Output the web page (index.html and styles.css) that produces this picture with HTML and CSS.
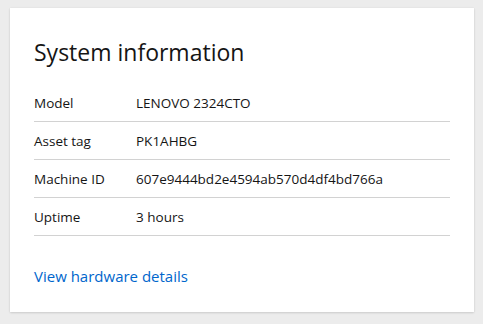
FILE: index.html
```html
<!DOCTYPE html>
<html lang="en">
<head>
    <meta charset="UTF-8">
    <title>System information</title>
    <link rel="stylesheet" href="styles.css">
</head>
<body>
<div class="page">
    <section class="card">
        <h2 class="card-title">System information</h2>
        <dl class="info-list">
            <div class="info-row">
                <dt>Model</dt>
                <dd>LENOVO 2324CTO</dd>
            </div>
            <div class="info-row">
                <dt>Asset tag</dt>
                <dd>PK1AHBG</dd>
            </div>
            <div class="info-row">
                <dt>Machine ID</dt>
                <dd>607e9444bd2e4594ab570d4df4bd766a</dd>
            </div>
            <div class="info-row">
                <dt>Uptime</dt>
                <dd>3 hours</dd>
            </div>
        </dl>
        <a class="card-link" href="#">View hardware details</a>
    </section>
</div>
</body>
</html>
```

FILE: styles.css
```css
*, ::before, ::after {
    box-sizing: border-box;
}

* {
    margin: 0;
}

html, body {
    height: 100%;
}

body {
    background: #ececec;
    font-family: "Open Sans", "Noto Sans", sans-serif;
    color: #151515;
}

.page {
    padding: 8px 9px 0 10px;
}

.card {
    display: flex;
    flex-direction: column;
    height: 304px;
    padding: 24px 24px 0;
    background: #fff;
    box-shadow: 0 1px 2px rgba(3, 3, 3, 0.12), 0 0 2px rgba(3, 3, 3, 0.06);
}

.card-title {
    font-size: 23px;
    font-weight: 400;
    line-height: 32px;
    margin-top: 4px;
}

.info-list {
    margin-top: 16px;
    font-size: 13.5px;
}

.info-row {
    display: flex;
    align-items: center;
    height: 38px;
    border-bottom: 1px solid #d2d2d2;
}

.info-row dt {
    width: 102px;
}

.info-row dd {
    margin: 0;
}

.card-link {
    margin-top: 30px;
    font-size: 15px;
    color: #0066cc;
    text-decoration: none;
}
```
